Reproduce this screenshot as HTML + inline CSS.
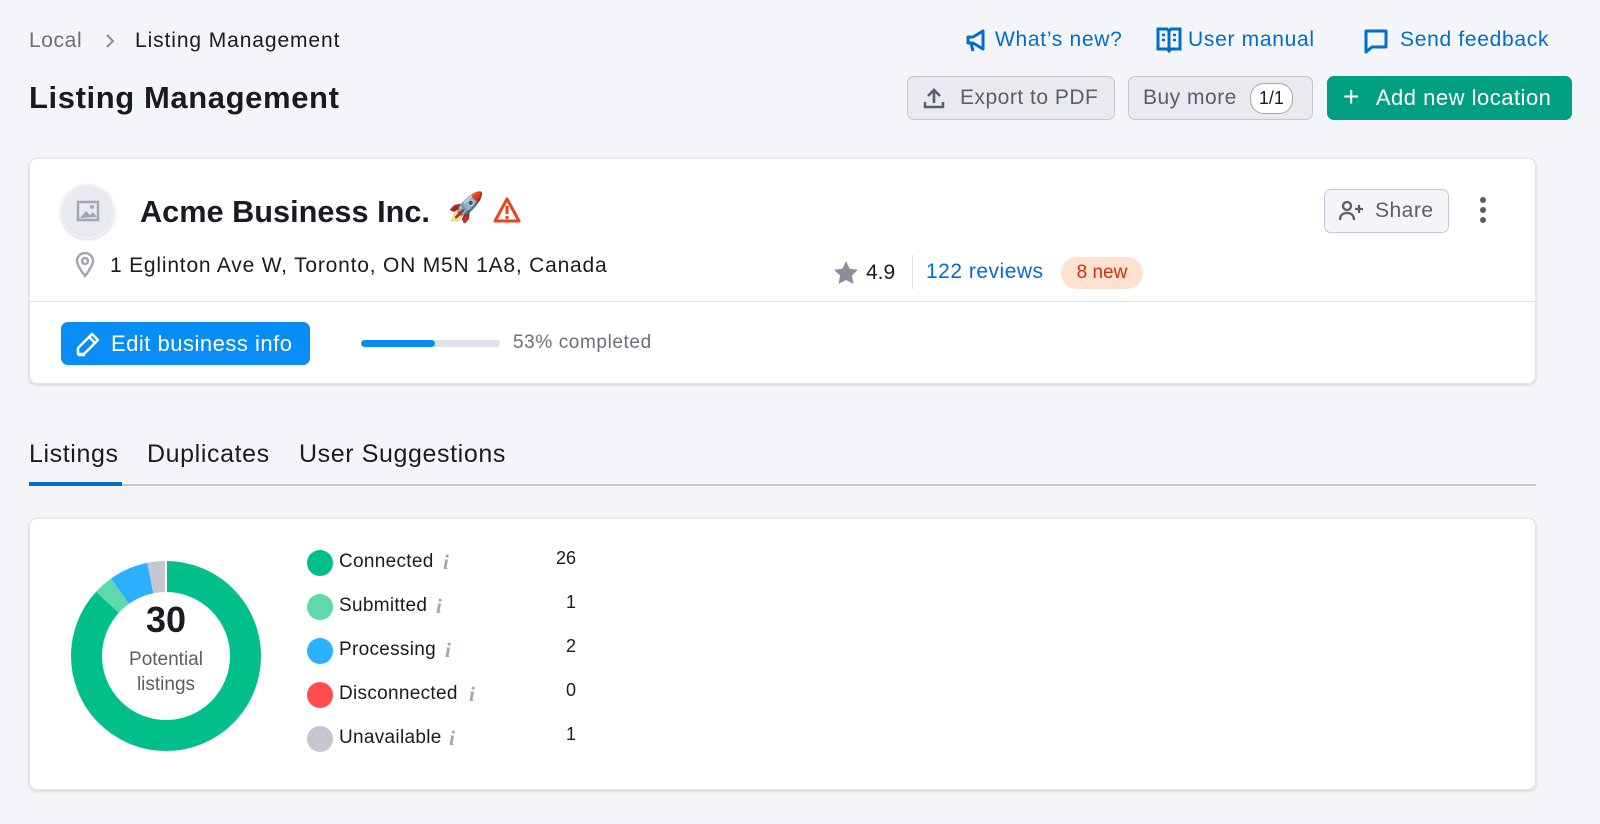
<!DOCTYPE html>
<html><head><meta charset="utf-8"><style>
*{box-sizing:border-box;margin:0;padding:0}
body{width:1600px;height:824px;background:#f4f5f9;font-family:"Liberation Sans",sans-serif;color:#191b23;position:relative;overflow:hidden}
.a{position:absolute;white-space:nowrap}
.link{color:#006dca;font-size:21px;letter-spacing:.7px}
.btn{position:absolute;border:1px solid #c4c7cf;background:#e8eaef;border-radius:7px;color:#5a5e6b;font-size:21px;display:flex;align-items:center;letter-spacing:.5px}
.card{position:absolute;background:#fff;border-radius:8px;box-shadow:0 1px 3px rgba(25,27,35,.18);border:1px solid #e4e5ea}
.dot{position:absolute;width:26px;height:26px;border-radius:50%}
.lbl{position:absolute;font-size:19px;color:#191b23;letter-spacing:.3px}
.inf{position:absolute;font-family:"Liberation Serif",serif;font-style:italic;color:#a3a7b3;font-size:21px;font-weight:bold}
.val{position:absolute;font-size:18px;text-align:right;width:40px}
.tab{position:absolute;font-size:25px;letter-spacing:.6px;white-space:nowrap}
</style></head><body>
<div class="a" style="left:29px;top:29px;font-size:21px;color:#6c6e79;letter-spacing:.6px">Local</div>
<svg class="a" style="left:104px;top:33px" width="12" height="16"><path d="M3 2l6 6-6 6" fill="none" stroke="#8b8e99" stroke-width="2"/></svg>
<div class="a" style="left:135px;top:29px;font-size:21px;letter-spacing:.9px">Listing Management</div>
<div class="a" style="left:29px;top:80px;font-size:31px;font-weight:bold;letter-spacing:.6px">Listing Management</div>

<svg class="a" style="left:964px;top:28px" width="24" height="26" viewBox="0 0 24 26"><path d="M4 9h5l10-6v18l-10-6H4z M7 15l2 8" fill="none" stroke="#006dca" stroke-width="3" stroke-linejoin="round"/></svg>
<div class="a link" style="left:995px;top:28px">What’s new?</div>
<svg class="a" style="left:1156px;top:26px" width="26" height="28" viewBox="0 0 26 28"><path d="M2 3h9l2 2 2-2h9v20h-9l-2 2-2-2H2z M13 5v20" fill="none" stroke="#006dca" stroke-width="3"/><path d="M6 9h3M6 14h3M17 9h3M17 14h3" stroke="#006dca" stroke-width="2.5"/></svg>
<div class="a link" style="left:1188px;top:28px">User manual</div>
<svg class="a" style="left:1363px;top:28px" width="26" height="26" viewBox="0 0 26 26"><path d="M3 3h20v16H9l-6 5z" fill="none" stroke="#006dca" stroke-width="3" stroke-linejoin="round"/></svg>
<div class="a link" style="left:1400px;top:28px">Send feedback</div>

<div class="btn" style="left:907px;top:76px;width:208px;height:44px;padding-left:14px"><svg width="24" height="24" viewBox="0 0 24 24"><path d="M12 17V4M6 10l6-6 6 6M3 16v5h18v-5" fill="none" stroke="#5a5e6b" stroke-width="2.6"/></svg><span style="margin-left:14px">Export to PDF</span></div>
<div class="btn" style="left:1128px;top:76px;width:185px;height:44px;padding-left:14px">Buy more<span style="margin-left:13px;border:1px solid #a3a7b3;background:#fff;border-radius:14px;font-size:18px;padding:4px 8px;color:#191b23;letter-spacing:0">1/1</span></div>
<div class="btn" style="left:1327px;top:76px;width:245px;height:44px;background:#009f81;border-color:#009f81;color:#fff;padding-left:15px;font-size:22px"><span style="font-size:28px;font-weight:300;margin-top:-3px">+</span><span style="margin-left:16px">Add new location</span></div>

<div class="card" style="left:29px;top:158px;width:1507px;height:226px">
  <div class="a" style="left:0;top:142px;width:1505px;height:1px;background:#dcdfe6"></div>
  <div class="a" style="left:30px;top:25px;width:55px;height:55px;border-radius:50%;background:#e8eaef;border:2px solid #f0f1f4;box-shadow:0 1px 2px rgba(0,0,0,.15)"></div>
  <svg class="a" style="left:46px;top:41px" width="24" height="22" viewBox="0 0 24 22"><rect x="2" y="2" width="20" height="18" fill="none" stroke="#a3a7b3" stroke-width="2.5"/><path d="M4 18l6-7 4 4 3-3 4 5z" fill="#a3a7b3"/><circle cx="16" cy="7" r="2" fill="#a3a7b3"/></svg>
  <div class="a" style="left:110px;top:35px;font-size:30.7px;font-weight:600">Acme Business Inc.</div>
  <div class="a" style="left:418px;top:32px;font-size:29px">🚀</div>
  <svg class="a" style="left:463px;top:37px" width="28" height="28" viewBox="0 0 28 28"><path d="M14 3L26 25H2z" fill="#fff" stroke="#e8441e" stroke-width="3" stroke-linejoin="round"/><path d="M14 10v8M14 20v3" stroke="#e8441e" stroke-width="3"/></svg>
  <svg class="a" style="left:44px;top:93px" width="22" height="26" viewBox="0 0 22 26"><path d="M11 24C5 16 3 12 3 9a8 8 0 0116 0c0 3-2 7-8 15z" fill="none" stroke="#a3a7b3" stroke-width="2.5"/><circle cx="11" cy="9" r="3" fill="none" stroke="#a3a7b3" stroke-width="2.5"/></svg>
  <div class="a" style="left:80px;top:95px;font-size:21px;letter-spacing:.8px">1 Eglinton Ave W, Toronto, ON M5N 1A8, Canada</div>
  <svg class="a" style="left:803px;top:101px" width="26" height="25" viewBox="0 0 24 23"><path d="M12 1l3.4 7 7.6 1-5.5 5.3 1.3 7.7L12 18.4 5.2 22l1.3-7.7L1 9l7.6-1z" fill="#8b8e99"/></svg>
  <div class="a" style="left:836px;top:102px;font-size:21px">4.9</div>
  <div class="a" style="left:882px;top:96px;width:1px;height:34px;background:#dcdfe6"></div>
  <div class="a link" style="left:896px;top:101px;letter-spacing:.5px">122 reviews</div>
  <div class="a" style="left:1031px;top:98px;width:82px;height:32px;border-radius:16px;background:#ffe1d2;color:#d1310a;font-size:19px;text-align:center;line-height:32px">8 new</div>
  <div class="btn" style="left:1294px;top:30px;width:125px;height:44px;padding-left:12px;background:#f4f5f9"><svg width="28" height="24" viewBox="0 0 28 24"><circle cx="10" cy="7" r="4" fill="none" stroke="#5a5e6b" stroke-width="2.3"/><path d="M3 21c0-5 3-7 7-7s7 2 7 7M22 6v8M18 10h8" fill="none" stroke="#5a5e6b" stroke-width="2.3"/></svg><span style="margin-left:10px">Share</span></div>
  <div class="a" style="left:1450px;top:38px;width:6px;height:6px;border-radius:50%;background:#5a5e6b;box-shadow:0 10px 0 #5a5e6b,0 20px 0 #5a5e6b"></div>
  <div class="a" style="left:31px;top:163px;width:249px;height:43px;border-radius:7px;background:#0a8cf5;color:#fff;font-size:22px;display:flex;align-items:center;padding-left:14px;letter-spacing:.5px"><svg width="26" height="26" viewBox="0 0 26 26"><path d="M17 3l6 6L9 23H3v-6z M14 6l6 6 M3 24h7" fill="none" stroke="#fff" stroke-width="2.5" stroke-linejoin="round"/></svg><span style="margin-left:10px">Edit business info</span></div>
  <div class="a" style="left:331px;top:181px;width:139px;height:7px;border-radius:4px;background:#e0e2e8"></div>
  <div class="a" style="left:331px;top:181px;width:74px;height:7px;border-radius:4px;background:#0a8cf5"></div>
  <div class="a" style="left:483px;top:173px;font-size:19px;color:#6c6e79;letter-spacing:.6px">53% completed</div>
</div>

<div class="tab" style="left:29px;top:440px">Listings</div>
<div class="tab" style="left:147px;top:440px">Duplicates</div>
<div class="tab" style="left:299px;top:440px">User Suggestions</div>
<div class="a" style="left:29px;top:484px;width:1507px;height:2px;background:#c4c7cf"></div>
<div class="a" style="left:29px;top:482px;width:93px;height:4px;background:#006dca"></div>

<div class="card" style="left:29px;top:518px;width:1507px;height:272px">
  <svg class="a" style="left:40px;top:41px" width="192" height="192" viewBox="0 0 192 192">
    <g transform="rotate(-90 96 96)" fill="none" stroke-width="31">
      <circle cx="96" cy="96" r="79.5" stroke="#00bf8b" stroke-dasharray="433.5 500" stroke-dashoffset="0"/>
      <circle cx="96" cy="96" r="79.5" stroke="#5ed9a9" stroke-dasharray="16.7 500" stroke-dashoffset="-433.5"/>
      <circle cx="96" cy="96" r="79.5" stroke="#2bb0ff" stroke-dasharray="33.3 500" stroke-dashoffset="-450.2"/>
      <circle cx="96" cy="96" r="79.5" stroke="#c4c7cf" stroke-dasharray="16.7 500" stroke-dashoffset="-483.5"/>
    </g>
    <line x1="96" y1="0" x2="96" y2="34" stroke="#fff" stroke-width="2"/>
  </svg>
  <div class="a" style="left:40px;top:80px;width:192px;text-align:center;font-size:36px;font-weight:bold">30</div>
  <div class="a" style="left:40px;top:128px;width:192px;text-align:center;font-size:19px;color:#5a5e6b;line-height:25px">Potential<br>listings</div>

  <div class="dot" style="left:277px;top:31px;background:#00bf8b"></div><div class="lbl" style="left:309px;top:32px">Connected</div><div class="inf" style="left:413px;top:31px">i</div><div class="val" style="left:506px;top:29px">26</div>
  <div class="dot" style="left:277px;top:75px;background:#5ed9a9"></div><div class="lbl" style="left:309px;top:76px">Submitted</div><div class="inf" style="left:406px;top:75px">i</div><div class="val" style="left:506px;top:73px">1</div>
  <div class="dot" style="left:277px;top:119px;background:#2bb0ff"></div><div class="lbl" style="left:309px;top:120px">Processing</div><div class="inf" style="left:415px;top:119px">i</div><div class="val" style="left:506px;top:117px">2</div>
  <div class="dot" style="left:277px;top:163px;background:#ff4d4d"></div><div class="lbl" style="left:309px;top:164px">Disconnected</div><div class="inf" style="left:439px;top:163px">i</div><div class="val" style="left:506px;top:161px">0</div>
  <div class="dot" style="left:277px;top:207px;background:#c4c7cf"></div><div class="lbl" style="left:309px;top:208px">Unavailable</div><div class="inf" style="left:419px;top:207px">i</div><div class="val" style="left:506px;top:205px">1</div>
</div>
</body></html>
